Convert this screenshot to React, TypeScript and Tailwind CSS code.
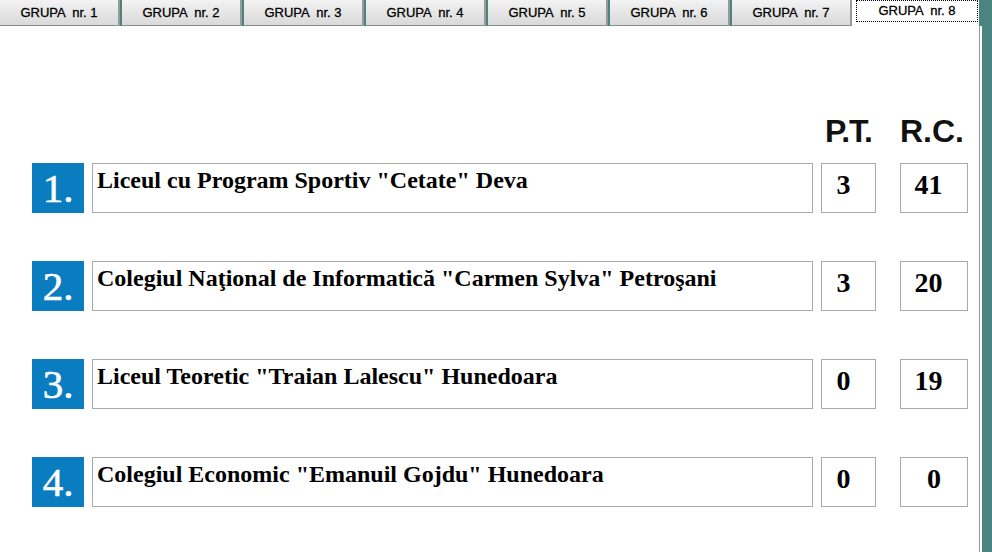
const tabs = [1, 2, 3, 4, 5, 6, 7];

const rows = [
  { nr: 1, name: 'Liceul cu Program Sportiv "Cetate" Deva', pt: 3, rc: 41 },
  { nr: 2, name: 'Colegiul Naţional de Informatică "Carmen Sylva" Petroşani', pt: 3, rc: 20 },
  { nr: 3, name: 'Liceul Teoretic "Traian Lalescu" Hunedoara', pt: 0, rc: 19 },
  { nr: 4, name: 'Colegiul Economic "Emanuil Gojdu" Hunedoara', pt: 0, rc: 0 },
];

function Tab({ nr }: { nr: number }) {
  return (
    <div className="flex h-[26px] w-[120px] items-center justify-center border-b border-r-2 border-b-[#8a8a8a] border-r-[#9a9a9a] bg-gradient-to-b from-[#f3f3f3] to-[#d9d9d9] text-[13px] whitespace-pre text-black [-webkit-text-stroke:0.3px_black]">
      {`GRUPA  nr. ${nr}`}
    </div>
  );
}

export default function App() {
  return (
    <div className="flex h-[552px] w-[992px] bg-white font-['Liberation_Sans',Arial,sans-serif]">
      <div className="flex w-[979px] flex-col">
        {/* tab strip */}
        <div className="flex h-[26px] items-start">
          {tabs.map((t) => (
            <div key={t} className="flex">
              <Tab nr={t} />
              {t < 7 && <div className="h-[26px] w-[2px] bg-[#4a8380]" />}
            </div>
          ))}
          <div className="ml-[4px] flex h-[22px] w-[122px] items-center justify-center border border-dotted border-black bg-white text-[13px] whitespace-pre text-black [-webkit-text-stroke:0.3px_black]">
            {"GRUPA  nr. 8"}
          </div>
        </div>

        {/* header */}
        <div className="mt-[89px] flex pl-[821px]">
          <div className="w-[55px] text-center text-[32px] leading-[32px] font-bold tracking-[-1px] text-[#111]">
            P.T.
          </div>
          <div className="ml-[24px] w-[68px] pr-[6px] text-center text-[32px] leading-[32px] font-bold text-[#111]">
            R.C.
          </div>
        </div>

        {/* rows */}
        <div className="mt-[16px] flex flex-col gap-[48px] pl-[32px] font-['Liberation_Serif','Times_New_Roman',serif]">
          {rows.map((r) => (
            <div key={r.nr} className="flex h-[50px] items-start">
              <div className="h-[50px] w-[52px] bg-[#0a7cc0] text-center text-[41px] leading-[50px] text-white [-webkit-text-stroke:0.6px_white]">
                {r.nr}.
              </div>
              <div className="ml-[8px] h-[50px] w-[721px] border border-[#aaaaaa] px-[4px] pt-[4px] text-[24px] leading-[24px] font-bold text-black">
                {r.name}
              </div>
              <div className="ml-[8px] h-[50px] w-[55px] border border-[#aaaaaa] pr-[10px] text-center text-[28px] leading-[42px] font-bold text-black">
                {r.pt}
              </div>
              <div
                className={
                  r.rc > 9
                    ? "ml-[24px] h-[50px] w-[68px] border border-[#aaaaaa] pr-[11px] text-center text-[28px] leading-[42px] font-bold text-black"
                    : "ml-[24px] h-[50px] w-[68px] border border-[#aaaaaa] text-center text-[28px] leading-[42px] font-bold text-black"
                }
              >
                {r.rc}
              </div>
            </div>
          ))}
        </div>
      </div>

      {/* right frame */}
      <div className="flex w-[13px] flex-col">
        <div className="h-[26px] bg-[#4a8380]" />
        <div className="flex flex-1">
          <div className="w-[1px] bg-[#9a9a9a]" />
          <div className="w-[2px] bg-white" />
          <div className="flex-1 bg-[#4a8380]" />
        </div>
      </div>
    </div>
  );
}
